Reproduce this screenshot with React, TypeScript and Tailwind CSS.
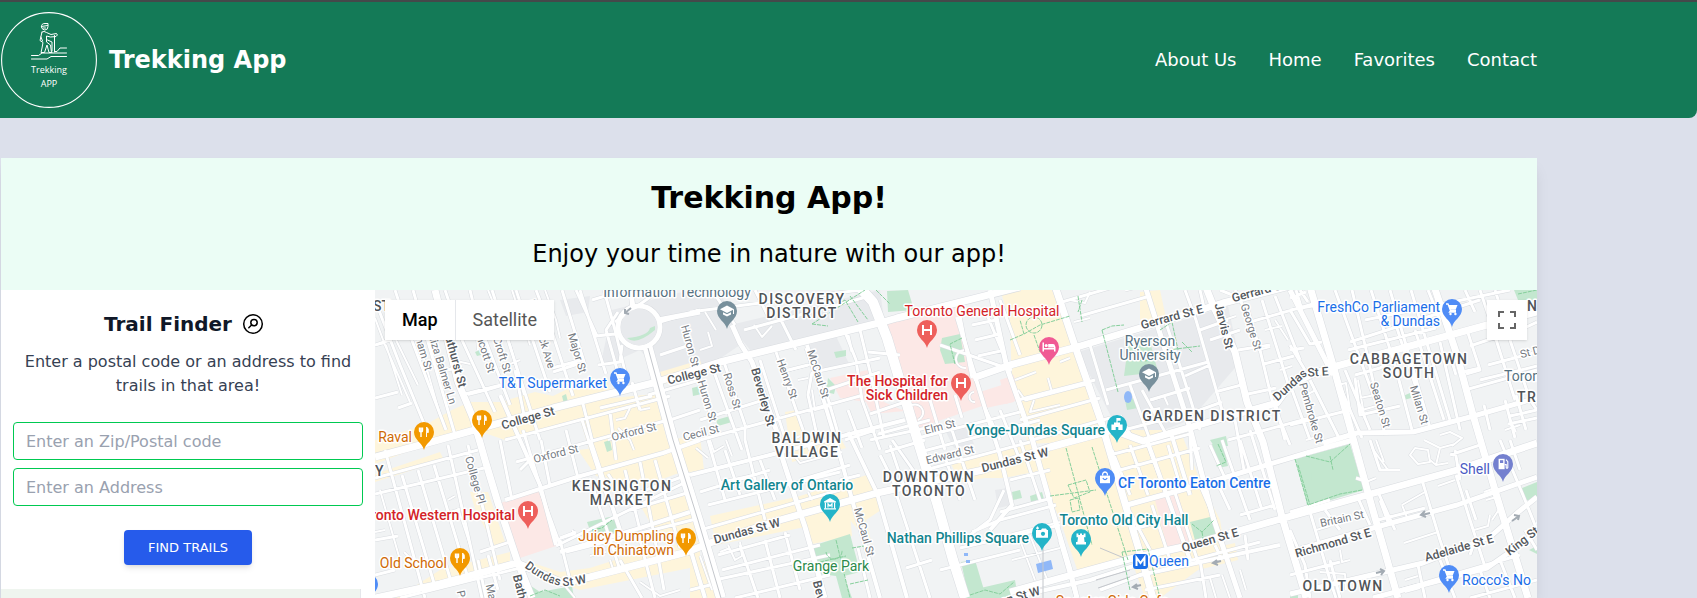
import React from "react";

const verdana = "font-[Verdana,'DejaVu_Sans',sans-serif]";

/* ---------- Map data ---------- */

const commercial = [
  "375,440 425,425 452,410 470,402 500,402 535,392 553,396 590,378 608,382 612,398 655,394 668,444 590,452 580,420 560,424 505,440 470,428 375,464",
  "660,372 700,360 704,372 664,384",
  "375,474 440,452 444,460 375,482",
  "578,450 700,436 704,470 676,474 660,480 620,492 600,492 608,478 596,476",
  "470,492 488,492 506,545 496,548 476,512",
  "380,596 412,588 440,570 510,552 510,572 450,586 400,598",
  "530,562 560,572 590,568 640,552 700,540 700,566 640,578 580,590 545,578",
  "640,505 690,492 700,530 660,540",
  "710,516 800,496 870,474 884,508 866,520 872,545 858,530 850,520 800,528 716,545",
  "805,525 850,514 852,536 812,544",
  "785,412 798,410 806,438 836,430 846,448 792,462",
  "950,462 1032,440 1044,470 1004,478 985,478 960,482",
  "690,566 708,560 716,598 690,598",
  "1000,290 1052,290 1074,350 1110,440 1028,444 1012,388 1010,320",
  "1140,292 1160,290 1166,318 1140,328",
  "1030,450 1100,430 1180,430 1200,480 1220,520 1225,550 1160,598 1145,598 1130,556 1078,572 1060,520",
  "1160,560 1235,543 1238,560 1190,572 1160,598",
];
const institutional = [
  "612,310 690,290 720,290 740,345 700,372 660,372 640,350 600,368",
  "730,325 880,290 884,320 755,356",
  "1078,352 1190,318 1228,306 1240,362 1190,420 1150,435 1118,430",
  "808,345 836,336 850,366 818,372",
  "944,428 966,424 974,444 954,448",
  "1041,452 1068,446 1076,474 1050,480",
  "995,490 1008,488 1012,505 998,508",
  "1030,352 1062,345 1068,365 1040,380 1030,372",
  "690,330 712,322 722,345 700,352",
  "560,300 590,296 588,312 566,316",
];
const hospitals = [
  "500,503 540,491 556,546 520,558",
  "885,322 955,302 985,405 918,428 908,405",
  "830,378 868,370 884,402 902,410 908,398 916,410 872,414 866,402 840,398",
  "980,392 1008,383 1014,402 986,408",
  "1155,500 1178,494 1192,546 1168,550",
  "1000,380 1014,375 1018,400 1006,404",
];
const parks = [
  "887,291 908,290 914,310 888,312",
  "942,338 960,334 965,362 945,364 940,350",
  "1128,346 1150,342 1158,372 1124,376",
  "587,522 614,516 618,532 592,536",
  "812,546 850,534 860,572 844,576 852,598 842,598 836,576 820,574",
  "961,562 975,560 984,590 968,594",
  "972,590 1015,580 1018,598 964,598",
  "1190,522 1214,516 1217,540 1196,544",
  "1295,459 1350,444 1364,490 1308,507",
  "1222,440 1228,466 1218,468 1212,444",
  "1300,462 1311,456 1312,508 1307,506",
  "1522,488 1537,482 1537,498 1524,501",
  "1514,290 1537,290 1537,300 1518,300",
  "1529,550 1537,546 1537,554",
  "716,420 730,416 732,422 718,426",
  "834,352 846,350 846,356 836,358",
  "692,388 700,386 702,394 693,396",
  "1403,396 1410,393 1411,398 1404,400",
  "475,352 480,350 481,355 477,356",
  "525,582 540,592 572,586 574,598 528,598",
  "1030,496 1042,492 1044,499 1031,502",
  "1012,492 1020,490 1022,498 1013,500",
  "604,442 610,440 612,450 607,452",
  "562,396 566,394 568,402 564,404",
  "1125,400 1134,398 1138,408 1127,410",
  "1210,440 1226,436 1228,446 1214,446",
  "828,378 836,386 834,394 826,392",
  "1290,592 1298,590 1298,598 1290,598",
];
const trails = [
  "M812 324L865 290M850 296L868 320M838 304L845 300L858 322M812 324L828 326",
  "M1010 340L1024 334L1020 320M1024 334L1040 325L1070 316M1026 325A8 8 0 1 1 1042 325A8 8 0 1 1 1026 325M1034 335L1040 352",
  "M1102 330L1118 392M1102 330L1112 326L1124 325M1130 350A14 12 0 0 0 1156 355M1160 330L1172 322L1178 350M1168 350L1200 346M1182 342L1192 352",
  "M1066 448L1092 545M1092 447L1128 560M1050 496L1096 490M1068 485L1086 480L1090 492L1074 498ZM1070 500L1078 498L1080 510L1072 512Z",
  "M1122 552L1148 549L1160 598M1122 552L1130 590",
  "M592 530L602 528L612 520M820 562L846 556M836 540L850 598M826 552A8 8 0 1 0 842 550M850 584L868 580M852 548L864 546",
  "M1295 459L1308 505L1340 494L1362 490M1306 456L1330 462L1350 444M1330 456L1333 470",
  "M1298 465L1310 505M970 595L985 590L1000 594L1014 582M1192 524L1202 532L1214 520M1202 532L1204 544",
  "M955 364L950 344L962 338M1078 296L1082 322M1218 444L1226 462L1216 466",
  "M1082 300L1078 312M876 290L890 304M1518 294L1537 290M530 596L545 590L560 596",
];

/* Streets grouped by painted width */
const streets: { w: number; d: string[] }[] = [
  {
    w: 2,
    d: [
      "M375 318L385 345L410 402M386 345L402 395M375 345L385 343M396 340L418 385M420 345L440 415M488 290L510 345L524 395M512 290L530 345M545 290L556 320L560 338",
      "M452 360L470 364M474 300L478 350M500 368L520 360M508 330L516 328M468 395L488 390L505 385",
      "M375 532L385 530M380 490L400 560M404 552L412 560M448 500L455 496M450 512L460 509M458 508L470 545",
      "M616 420L625 418L630 408M640 410L650 408M618 428L630 440L634 450M608 440L640 430",
      "M700 350L712 346L708 332M705 312L716 330M754 325L762 337L772 326M786 345L800 341",
      "M790 370L812 364L816 378M798 380L808 378M812 390L815 410L830 406",
      "M964 350A5 5 0 1 0 966 368M974 392A5 5 0 1 0 975 402M912 405A7 7 0 1 1 918 420",
      "M1015 380L1036 372M1018 390L1025 400L1050 392M1034 400L1030 412L1060 405M1048 378L1052 392M1060 362L1070 358M1074 322L1090 318",
      "M1070 300L1085 303L1090 292M1152 400L1164 396L1168 405M1150 410L1160 408M1224 320L1236 316",
      "M1265 330L1282 326M1258 350L1270 347M1275 320L1288 340M1280 370L1292 366",
      "M1338 385L1346 383L1350 410M1358 380L1365 420M1362 410L1380 405M1360 398L1375 395M1306 440L1320 436M1308 394L1316 390",
      "M1410 455L1415 448L1428 450L1430 462L1418 464ZM1424 440L1440 448L1455 444M1430 460L1436 465L1448 463M1440 448L1436 465M1440 435L1450 432L1462 438L1452 446",
      "M1372 448L1388 470L1400 470M1376 440L1384 462M1366 482L1376 478M1402 505L1425 492M1402 505L1408 520M1438 486L1455 480M1484 492L1495 488M1486 500L1500 496M1404 543L1438 532",
      "M1492 520L1500 508M1474 530L1488 526L1490 515M1505 430L1520 425M1510 420L1516 432",
      "M1316 530L1330 526M1340 550L1342 562L1350 560M1320 572L1345 574L1346 590M1405 580L1418 576M1405 592L1420 588",
      "M1210 578L1216 598M1222 575L1230 598M1240 570L1246 590M1012 534L1060 522M1012 560L1060 548M1020 540L1035 580M1030 535L1048 582",
      "M700 556L712 590M728 545L735 560L742 556L740 542M720 552L730 548M696 448L708 458M710 440L714 452L724 446M726 440L732 456",
      "M790 450L800 463L842 452M808 492L812 500M792 440L800 436M720 482L758 474",
      "M556 540L575 534L572 530M590 556L606 552M560 580L575 598M640 582L660 596L680 590M610 560L614 572",
    ],
  },
  {
    w: 3,
    d: [
      "M375 300L400 365L432 443M395 290L408 330L446 430M413 290L455 435M445 290L462 340L495 412M470 290L476 315L510 405M492 290L540 440M516 290L550 392M536 290L552 332L573 396M562 290L585 365M580 290L606 374M604 290L615 330L628 384",
      "M375 345L390 340M375 398L398 392M398 408L412 403M448 370L462 366M465 394L505 384M515 370L525 420M552 368L582 360M553 372L578 364M596 336L615 334M598 365L620 362L622 345",
      "M375 494L484 468M375 478L478 450M385 450L425 598M402 475L436 590M418 470L452 585M434 465L468 578M448 445L482 598M468 445L500 580M500 440L512 500M523 430L540 486M541 440L550 486",
      "M375 540L398 536M375 575L395 570M480 552L510 542M400 598L520 568M486 598L478 560M498 590L488 555",
      "M516 462L668 420M505 440L670 396M520 470L530 460M566 430L578 478M582 420L608 500M590 478L620 570M608 474L625 500M625 470L640 530M640 462L655 540M655 460L680 548M540 490L560 545M560 538L576 532",
      "M566 552L700 518M556 546L690 480M630 510L690 492M618 500L690 474M560 540L570 580M655 540L664 590M620 560L642 598M640 540L655 598",
      "M582 400L592 440M610 412L616 460M600 408L652 396M632 382L640 410",
      "M597 336L576 290M592 300L625 290M615 322L660 290M660 322L700 310M620 380L606 330L618 312M660 355L690 345M648 395L700 380",
      "M690 312L860 290M744 330L870 296M780 318L796 350M712 290L735 325M755 290L770 320",
      "M700 410L670 420M698 372L712 420M712 366L742 450M760 360L784 435M776 352L810 450M724 362L745 425M700 440L860 396M700 420L770 398M745 425L745 440",
      "M806 348L814 372L880 358M780 372L808 365M848 335L852 352M845 332L856 360L862 400L880 450M860 330L872 380L884 438M820 392L880 372M868 352L900 355M824 385L840 440M812 372L808 395L818 440",
      "M870 414L905 402M878 434L930 420M885 452L925 440M918 438L1020 412M920 452L1040 420M925 470L1030 442",
      "M948 418L975 500M1000 410L1020 460M985 408L1000 440M1020 440L1040 500M946 460L960 500M930 400L945 450M955 395L962 418",
      "M972 378L960 316M985 310L1010 370M975 340L1000 334M978 356L1005 350M972 325L996 320M1000 300L1020 355M940 345L1012 370",
      "M960 548L1060 525M940 570L1020 550M972 532L1000 520L1056 505M1000 512L1052 498M1010 480L1050 470M1004 490L990 520L970 535",
      "M1025 400L1090 383M1018 400L1095 380M1032 440L1110 418M1020 420L1100 398M1090 345L1108 405M1106 390L1208 362M1120 415L1132 438M1130 385L1150 440M1142 390L1165 432",
      "M1185 290L1196 320L1222 410M1165 320L1175 350L1200 430M1200 330L1228 320M1185 376L1210 365M1210 340L1240 330M1215 392L1245 384M1150 400L1190 388",
      "M1062 302L1110 288M1080 316L1150 296M1125 290L1145 285M1200 290L1205 312M1220 290L1240 298",
      "M1248 310L1260 350L1272 400L1290 445M1262 300L1290 390M1275 296L1300 360M1250 322L1320 302M1264 364L1294 356M1248 394L1276 388M1238 350L1270 345M1290 310L1318 305M1300 290L1308 302M1235 290L1250 320",
      "M1275 402L1285 440M1292 390L1310 440M1290 345L1305 370M1310 380L1340 440M1333 370L1362 438M1345 370L1370 430",
      "M1335 290L1375 400M1352 290L1365 345L1385 435M1371 290L1395 365L1412 430M1390 290L1425 410L1430 428M1411 290L1450 420M1428 290L1440 320M1290 298L1306 292M1290 350L1304 348M1290 310L1310 344L1322 342M1296 290L1302 310",
      "M1348 350L1436 328M1350 342L1480 300M1365 320L1510 290M1355 375L1380 368L1390 362M1355 378L1360 415L1400 406M1395 322L1420 400M1440 342L1460 430M1415 330L1444 420",
      "M1462 372L1480 368M1465 290L1475 312M1480 290L1490 320L1515 400M1495 290L1502 312M1470 346L1500 336M1488 365L1537 352M1500 310L1530 400L1537 410M1467 330L1480 370L1466 374M1480 380L1537 366M1520 330L1537 322",
      "M1456 375L1450 355M1484 405L1490 430M1505 400L1515 438M1510 416L1537 410M1508 424L1537 418M1516 395L1526 430M1465 390L1537 370",
      "M1110 455L1190 434M1112 450L1130 495M1130 445L1148 495M1146 440L1165 492M1168 445L1180 485M1190 435L1192 470M1120 470L1200 448M1124 430L1200 410L1222 402",
      "M1130 512L1150 550M1152 505L1170 560M1174 490L1198 562M1200 485L1215 520M1210 445L1225 478M1222 440L1250 520M1240 440L1262 510M1130 530L1160 522M1216 480L1230 510M1235 420L1244 470M1250 430L1275 510",
      "M1200 560L1206 598M1215 545L1222 560M1245 535L1248 560M1228 440L1310 418M1240 515L1275 505M1145 590L1220 575M1170 566L1260 542",
      "M1290 425L1350 410M1308 505L1330 580L1336 598M1358 498L1370 525M1378 492L1395 530M1290 530L1305 565L1310 598M1378 520L1425 508M1380 500L1388 522M1325 510L1340 530M1356 478L1362 480",
      "M1422 480L1440 540L1450 570M1456 475L1470 520L1486 570M1455 450L1460 480M1500 440L1525 500L1537 530M1450 455L1480 445M1470 555L1475 540M1290 512L1330 500M1290 575L1340 562",
      "M1370 440L1380 470L1400 470M1510 440L1520 470M1466 490L1476 520M1400 590L1520 555M1418 565L1425 598M1440 560L1455 598M1480 570L1490 598M1500 560L1515 598M1525 530L1537 550M1340 598L1330 560M1470 598L1537 580",
      "M700 492L770 470M710 470L790 450M708 440L725 500M725 450L740 495M745 440L765 520M760 460L775 500M708 505L840 472M700 530L840 490M718 555L790 535M722 570L820 545M715 580L830 555M740 545L758 598M765 540L780 598M785 532L800 590M735 598L830 575",
      "M840 480L860 475M845 440L875 430M848 410L862 448M890 445L905 490M895 490L930 598M858 548L870 598M906 568L932 560M892 440L920 480M870 440L940 425M800 480L850 465M690 590L710 585M880 455L895 485",
    ],
  },
  {
    w: 4,
    d: [
      "M505 500L577 477L663 453L700 440",
      "M560 552L640 528L690 512",
      "M690 475L770 455L850 434L905 420",
      "M807 345L835 438L853 503L880 598",
      "M848 432L877 493L907 598",
      "M957 317L987 415L1000 455L1012 505L990 530",
      "M500 395L540 485L556 545",
      "M590 440L620 530",
      "M1100 590L1140 575L1210 560L1280 545",
      "M1077 598L1060 540",
      "M690 548L705 598",
      "M1143 563L1090 580L1010 598",
      "M1147 440L1190 560M1170 430L1190 495",
    ],
  },
  {
    w: 5,
    d: [
      "M732 325L740 343L752 362L777 432L782 457L797 503L805 527L825 598",
      "M990 290L1007 368L1033 442L1053 513L1070 570L1077 598",
      "M1140 270L1147 292L1173 375L1190 428L1213 517L1240 598",
      "M1127 505L1210 482L1310 452L1353 440",
      "M1323 443L1357 433L1413 432L1470 417L1537 398",
      "M1297 550L1373 528L1457 505L1537 477",
      "M1290 594L1350 580L1423 563L1490 537L1517 513L1537 497",
      "M1373 598L1487 568L1537 533",
      "M630 285L633 308M700 312L658 320",
      "M1333 375L1290 290",
    ],
  },
  {
    w: 7,
    d: [
      "M435 290L458 382L473 418L485 460L498 503L517 560L532 598",
      "M375 457L435 441L553 408L657 382L720 362L883 322L897 318L1020 287",
      "M973 378L1010 365L1077 347L1140 328L1223 303L1290 286",
      "M375 598L440 584L517 563L563 583L590 577L687 552L710 543L780 520L877 493L983 470L1050 447L1113 430L1143 441L1223 418L1277 403L1290 385L1310 375L1333 367L1487 325L1537 312",
      "M1010 592L1137 557L1183 547L1277 520L1367 495L1457 470L1537 443",
      "M1053 280L1077 352L1100 418L1127 510L1143 563L1153 598",
      "M1205 285L1213 305L1235 352L1247 402L1263 442L1282 517L1303 587L1306 598",
      "M1308 280L1333 365L1353 438L1370 500L1398 598",
      "M1432 280L1457 355L1473 415L1497 497L1528 598",
    ],
  },
  {
    w: 10,
    d: [
      "M647 345L673 440L698 520L721 598",
      "M853 280L873 302L887 338L913 425L937 503L953 560L965 598",
    ],
  },
];

/* ---------- Map labels ---------- */

type Street = [string, number, number, number, boolean?];
const streetNames: Street[] = [
  ["College St", 528, 418, -16, true],
  ["College St", 694, 374, -14, true],
  ["Oxford St", 634, 432, -14],
  ["Oxford St", 556, 454, -14],
  ["Bathurst St", 455, 358, 75, true],
  ["Eliza Balmer Ln", 442, 368, 73],
  ["Markham St", 420, 342, 73],
  ["Lippincott St", 482, 343, 72],
  ["Croft St", 502, 355, 72],
  ["Brunswick Ave", 541, 334, 73],
  ["Major St", 577, 353, 73],
  ["Huron St", 690, 346, 75],
  ["Huron St", 707, 401, 73],
  ["Ross St", 732, 391, 73],
  ["Beverley St", 763, 397, 74, true],
  ["Henry St", 787, 379, 70],
  ["McCaul St", 818, 374, 72],
  ["McCaul St", 864, 532, 74],
  ["Cecil St", 701, 433, -14],
  ["College Pl", 475, 480, 74],
  ["Dundas St W", 747, 531, -15, true],
  ["Dundas St W", 1015, 460, -14, true],
  ["Elm St", 940, 427, -14],
  ["Edward St", 950, 455, -14],
  ["Gerrard St E", 1172, 317, -15, true],
  ["Gerrard St E", 1263, 290, -15, true],
  ["Jarvis St", 1224, 326, 76, true],
  ["George St", 1251, 327, 73],
  ["Dundas", 1290, 385, -42, true],
  ["St E", 1318, 372, -4, true],
  ["Pembroke St", 1311, 413, 74],
  ["Seaton St", 1380, 405, 73],
  ["Milan St", 1419, 405, 73],
  ["Queen St E", 1210, 540, -16, true],
  ["Richmond St E", 1333, 543, -16, true],
  ["Adelaide St E", 1459, 548, -16, true],
  ["King St E", 1526, 538, -38, true],
  ["Britain St", 1342, 519, -12],
  ["St David St", 1546, 348, -15],
  ["Bathurst St", 524, 604, 76, true],
  ["Markham", 494, 607, 78],
  ["Palmerston", 466, 618, 78],
  ["Beverley St", 824, 610, 76, true],
  ["Queen St W", 1010, 599, -16, true],
];

const districts: [string, number, number][] = [
  ["DISCOVERY", 802, 304],
  ["DISTRICT", 802, 318],
  ["BALDWIN", 807, 443],
  ["VILLAGE", 807, 457],
  ["KENSINGTON", 622, 491],
  ["MARKET", 622, 505],
  ["DOWNTOWN", 929, 482],
  ["TORONTO", 929, 496],
  ["GARDEN DISTRICT", 1212, 421],
  ["CABBAGETOWN", 1409, 364],
  ["SOUTH", 1409, 378],
  ["OLD TOWN", 1343, 591],
];

type Place = { t: string; x: number; y: number; a: "start" | "middle" | "end"; c: string };
const red = "fill-[#d32228]";
const teal = "fill-[#12858f]";
const blue = "fill-[#1a6ee8]";
const orange = "fill-[#cf6a05]";
const slate = "fill-[#56717f]";
const places: Place[] = [
  { t: "Information Technology", x: 677, y: 297, a: "middle", c: slate },
  { t: "T&T Supermarket", x: 607, y: 388, a: "end", c: blue },
  { t: "Raval", x: 412, y: 442, a: "end", c: orange },
  { t: "Toronto Western Hospital", x: 515, y: 520, a: "end", c: red },
  { t: "Old School", x: 447, y: 568, a: "end", c: orange },
  { t: "Juicy Dumpling", x: 674, y: 541, a: "end", c: orange },
  { t: "in Chinatown", x: 674, y: 555, a: "end", c: orange },
  { t: "Toronto General Hospital", x: 982, y: 316, a: "middle", c: red },
  { t: "The Hospital for", x: 948, y: 386, a: "end", c: red },
  { t: "Sick Children", x: 948, y: 400, a: "end", c: red },
  { t: "Yonge-Dundas Square", x: 1105, y: 435, a: "end", c: teal },
  { t: "Ryerson", x: 1150, y: 346, a: "middle", c: slate },
  { t: "University", x: 1150, y: 360, a: "middle", c: slate },
  { t: "CF Toronto Eaton Centre", x: 1118, y: 488, a: "start", c: blue },
  { t: "Art Gallery of Ontario", x: 787, y: 490, a: "middle", c: teal },
  { t: "Nathan Phillips Square", x: 1029, y: 543, a: "end", c: teal },
  { t: "Toronto Old City Hall", x: 1124, y: 525, a: "middle", c: teal },
  { t: "Grange Park", x: 831, y: 571, a: "middle", c: "fill-[#2b8a4a]" },
  { t: "Queen", x: 1149, y: 566, a: "start", c: blue },
  { t: "FreshCo Parliament", x: 1440, y: 312, a: "end", c: blue },
  { t: "& Dundas", x: 1440, y: 326, a: "end", c: blue },
  { t: "Shell", x: 1490, y: 474, a: "end", c: "fill-[#4a5bc4]" },
  { t: "Rocco's No", x: 1462, y: 585, a: "start", c: blue },
  { t: "Toronto", x: 1504, y: 381, a: "start", c: slate },
  { t: "Scooter Girls Cafe", x: 1112, y: 606, a: "middle", c: orange },
];

const emphasised = new Set([
  "Toronto Western Hospital",
  "The Hospital for",
  "Sick Children",
  "Yonge-Dundas Square",
  "CF Toronto Eaton Centre",
  "Art Gallery of Ontario",
  "Nathan Phillips Square",
  "Toronto Old City Hall",
]);

/* ---------- Pins ---------- */

const glyphs: Record<string, React.ReactNode> = {
  hospital: <path d="M-4 -5V5M4 -5V5M-4 0H4" strokeWidth="2" />,
  food: (
    <g>
      <path d="M-4.5 -4.5V-1.5Q-4.5 0 -3 0Q-1.5 0 -1.5 -1.5V-4.5M-3 -4.5V5" strokeWidth="1.4" />
      <path d="M2.5 5V-5Q5 -4 4.4 0.5H2.5Z" fill="white" strokeWidth="0.8" />
    </g>
  ),
  cart: (
    <g>
      <path d="M-6 -5H-4L-1.5 1.5H4M-1.5 1.5L-2.5 3H4" strokeWidth="1.3" />
      <path d="M-3.6 -4H5.5L3.6 0.8H-2Z" fill="white" stroke="none" />
      <circle cx="-1.5" cy="5" r="1.2" fill="white" stroke="none" />
      <circle cx="3.4" cy="5" r="1.2" fill="white" stroke="none" />
    </g>
  ),
  cap: (
    <g fill="white" stroke="none">
      <path d="M0 -5.5L7 -1.7L0 2L-7 -1.7Z" />
      <path d="M-4 1.2L0 3.3L4 1.2V3.5L0 5.6L-4 3.5Z" />
      <path d="M6 -1.7H7V3H6Z" />
    </g>
  ),
  bed: (
    <g fill="white" stroke="none">
      <path d="M-6.5 -4.5H-5V1H5V-0.5H6.5V4.5H5V2.6H-5V4.5H-6.5Z" />
      <circle cx="-2.8" cy="-1.6" r="1.5" />
      <path d="M-0.8 -3H4Q6 -3 6 -1V0.4H-0.8Z" />
    </g>
  ),
  museum: (
    <g>
      <path d="M0 -6L6 -2.6V-1.4H-6V-2.6ZM-6 4.2H6V5.6H-6Z" fill="white" stroke="none" />
      <path d="M-4.6 -1.5V4.5M4.6 -1.5V4.5M-2 3.4V-0.2L0 2L2 -0.2V3.4" strokeWidth="1.2" />
    </g>
  ),
  flag: (
    <g fill="white" stroke="none">
      <path d="M-0.6 -7H3.6V-4.2H0.6V-2.6H3V-0.4H5.6V5H1.3V2H-1.3V5H-5.6V-0.4H-3V-2.6H-0.6Z" />
    </g>
  ),
  camera: (
    <g>
      <path d="M-6 -3H-1L0 -4.5H4L5 -3H6V4.8H-6Z" fill="white" stroke="none" />
      <circle cx="1" cy="0.8" r="2.1" className="fill-[#24b4c8]" stroke="none" />
      <path d="M-4.5 -6.4V-3.4M-6 -4.9H-3" strokeWidth="1.1" />
    </g>
  ),
  tower: <path d="M-4.5 -5.5H-2.6V-4H-1V-5.5H1V-4H2.6V-5.5H4.5V-1.8H3L3.6 3H5V5.4H-5V3H-3.6L-3 -1.8H-4.5Z" fill="white" stroke="none" />,
  bag: (
    <g>
      <path d="M-5 -2.4H5V5.2H-5Z" fill="white" stroke="none" />
      <path d="M-2.4 -2.4V-3.6A2.4 2.4 0 0 1 2.4 -3.6V-2.4" strokeWidth="1.3" />
      <path d="M-2.2 0Q0 3.4 2.2 0" className="stroke-[#4f8cf6]" strokeWidth="1.2" />
    </g>
  ),
  fuel: (
    <g>
      <path d="M-4.4 -5.2H1.6V5.2H-4.4Z" fill="white" stroke="none" />
      <path d="M-3 -3.8H0.2V-1H-3Z" className="fill-[#7480cf]" stroke="none" />
      <path d="M1.6 0.6H3.2V3.6Q4 4.8 4.8 3.6V-2.4L3 -4.4" strokeWidth="1.1" />
    </g>
  ),
};

const pins: { k: string; x: number; y: number; c: string }[] = [
  { k: "food", x: 424, y: 432, c: "fill-[#f29900]" },
  { k: "food", x: 482, y: 420, c: "fill-[#f29900]" },
  { k: "food", x: 460, y: 558, c: "fill-[#f29900]" },
  { k: "food", x: 686, y: 538, c: "fill-[#f29900]" },
  { k: "cart", x: 620, y: 378, c: "fill-[#4f8cf6]" },
  { k: "cart", x: 1452, y: 309, c: "fill-[#4f8cf6]" },
  { k: "cart", x: 1449, y: 575, c: "fill-[#4f8cf6]" },
  { k: "cart", x: 368, y: 584, c: "fill-[#4f8cf6]" },
  { k: "hospital", x: 528, y: 511, c: "fill-[#ee5f5b]" },
  { k: "hospital", x: 927, y: 330, c: "fill-[#ee5f5b]" },
  { k: "hospital", x: 961, y: 383, c: "fill-[#ee5f5b]" },
  { k: "cap", x: 727, y: 311, c: "fill-[#78909c]" },
  { k: "cap", x: 1149, y: 374, c: "fill-[#78909c]" },
  { k: "bed", x: 1049, y: 347, c: "fill-[#f05a94]" },
  { k: "flag", x: 1117, y: 425, c: "fill-[#24b4c8]" },
  { k: "museum", x: 830, y: 504, c: "fill-[#24b4c8]" },
  { k: "camera", x: 1042, y: 533, c: "fill-[#24b4c8]" },
  { k: "tower", x: 1081, y: 539, c: "fill-[#24b4c8]" },
  { k: "bag", x: 1105, y: 478, c: "fill-[#4f8cf6]" },
  { k: "fuel", x: 1503, y: 464, c: "fill-[#7480cf]" },
];

function CityMap() {
  return (
    <svg
      viewBox="375 290 1162 308"
      preserveAspectRatio="xMinYMin slice"
      className="block h-full w-full bg-[#f1f3f4] font-[Roboto,sans-serif]"
      role="img"
      aria-label="Map of downtown Toronto"
    >
      {institutional.map((p) => (
        <polygon key={p} points={p} className="fill-[#e8eaed]" />
      ))}
      {commercial.map((p) => (
        <polygon key={p} points={p} className="fill-[#fef5db]" />
      ))}
      {hospitals.map((p) => (
        <polygon key={p} points={p} className="fill-[#fce8e6]" />
      ))}
      {parks.map((p) => (
        <polygon key={p} points={p} className="fill-[#c3e7cf]" />
      ))}

      <g fill="none" strokeLinejoin="round">
        {streets.map((s) => (
          <path key={s.w} d={s.d.join("")} strokeWidth={s.w + 1} className="stroke-[#d9dce0]" />
        ))}
        <circle cx="639" cy="327" r="21" strokeWidth="6" className="stroke-[#d9dce0]" />
        {streets.map((s) => (
          <path key={s.w} d={s.d.join("")} strokeWidth={s.w} stroke="white" />
        ))}
        <circle cx="639" cy="327" r="21" strokeWidth="5" stroke="white" />
      </g>
      <circle cx="639" cy="327" r="18" className="fill-[#e8eaed]" />
      <path d="M627 338Q636 346 655 330V326L650 328Q648 336 627 338Z" className="fill-[#c3e7cf]" />
      <ellipse cx="1128" cy="397" rx="4" ry="6" className="fill-[#90b8f8]" />
      <path d="M1036 564L1051 560L1053 569L1038 573ZM964 553h4v3h-4ZM966 560h4v3h-4Z" className="fill-[#90b8f8]" />
      <path
        d="M648 348L673 440L698 520L721 598M1100 548L1124 558M1096 580L1130 570M1098 588L1130 577M1043 545V598"
        fill="none"
        strokeWidth="1"
        className="stroke-[#c4c7cc]"
      />
      <path d={trails.join("")} fill="none" strokeWidth="1" strokeDasharray="4 1" className="stroke-[#86cf9c]" />
      <g fill="none" strokeWidth="2" className="stroke-[#a3abb3]">
        <path d="M1422 515L1430 513M1425 511L1421 515L1426 517" />
        <path d="M1512 521L1519 516M1514 515L1519 516L1518 520" />
        <path d="M1376 573L1384 571M1380 569L1384 571L1381 575" />
        <path d="M1213 563L1221 561M1217 560L1213 563L1218 565" />
        <path d="M1133 587L1141 585M1137 584L1133 587L1138 589" />
        <path d="M625 313L631 308M625 309V313L629 314" />
      </g>

      <g className="stroke-white [paint-order:stroke]" strokeWidth="3" strokeLinejoin="round">
        {streetNames.map(([t, x, y, r, major]) => (
          <text
            key={t + x}
            transform={`translate(${x} ${y}) rotate(${r})`}
            textAnchor="middle"
            dominantBaseline="central"
            className={major ? "fill-[#53575c] text-[12px] font-medium" : "fill-[#74797f] text-[11px]"}
          >
            {t}
          </text>
        ))}
        <path id="dundas-bend" d="M524 567Q548 586 565 586Q578 586 594 580" fill="none" stroke="none" />
        <text className="fill-[#53575c] text-[12px] font-medium">
          <textPath href="#dundas-bend">Dundas St W</textPath>
        </text>
        {districts.map(([t, x, y]) => (
          <text key={t} x={x} y={y} textAnchor="middle" className="fill-[#505458] text-[14px] font-medium tracking-widest">
            {t}
          </text>
        ))}
        <text x="375" y="476" className="fill-[#505458] text-[14px] font-medium">Y</text>
        <text x="373" y="311" className="fill-[#505458] text-[14px] font-medium">ST</text>
        <text x="1527" y="311" className="fill-[#505458] text-[14px] font-medium">N</text>
        <text x="1517" y="402" className="fill-[#505458] text-[14px] font-medium tracking-widest">TR</text>
        {places.map((p) => (
          <text
            key={p.t}
            x={p.x}
            y={p.y}
            textAnchor={p.a}
            className={`${p.c} ${emphasised.has(p.t) ? "font-medium" : "font-normal"} text-[14px]`}
          >
            {p.t}
          </text>
        ))}
      </g>

      {pins.map((p) => (
        <g key={`${p.x}-${p.y}`} transform={`translate(${p.x} ${p.y})`}>
          <path d="M0 18C-1.5 11 -10 8 -10 0A10 10 0 1 1 10 0C10 8 1.5 11 0 18Z" className={p.c} />
          <g fill="none" stroke="white">
            {glyphs[p.k]}
          </g>
        </g>
      ))}
      <rect x="1133" y="554" width="15" height="15" rx="3" className="fill-[#1a6ee8]" />
      <path d="M1136.5 566V557.5L1140.5 563L1144.5 557.5V566" fill="none" stroke="white" strokeWidth="2" />
    </svg>
  );
}

function Logo() {
  return (
    <svg viewBox="0 0 96 96" className="size-24" fill="none" stroke="white" aria-hidden="true">
      <circle cx="48" cy="48" r="47.4" strokeWidth="1.1" />
      <g strokeWidth="1" strokeLinecap="round" strokeLinejoin="round">
        <path d="M40.5 15Q40 11.5 44 11.5H47V14.5Q47 18 43.8 18Q41 18 40.5 15ZM40.5 14.5L46.5 13.5M42.5 16H44.5" />
        <path d="M41 20Q43 18.500 45.500 20.500L50 22.500L55.500 21.500Q57.500 23 55 24.500L49.500 25L45.500 24V30L49.500 33L50.500 40.500M41 20L39 28.500L42 30.500L41 36L40 40.500H43.500L46 33L48 40.500H51M40 25L41.500 29" />
        <path d="M53.500 23.500V40M46.500 28L51 30V39" />
        <path d="M30.500 43.500H37.500L41 41H65.500M30.500 47H46L50 44.500H65.500M53.500 39.500H56L59 36H65.500" />
      </g>
      <g fill="white" stroke="none" className="font-['Open_Sans',sans-serif]" textAnchor="middle">
        <text x="48" y="61" className="text-[9px]">Trekking</text>
        <text x="48" y="75" className="text-[9px] font-medium">APP</text>
      </g>
    </svg>
  );
}

export default function App() {
  return (
    <div className={`flex min-h-screen flex-col overflow-x-hidden bg-[#dce0eb] text-black ${verdana}`}>
      <header className="rounded-br-lg border-t-2 border-[#45484a] bg-[#147a57] text-white">
        <div className="ml-px flex max-w-screen-2xl items-center justify-between py-2.5">
          <a href="#" className="flex items-center gap-3">
            <Logo />
            <span className="text-2xl font-bold">Trekking App</span>
          </a>
          <nav>
            <ul className="flex gap-8 text-lg">
              <li><a href="#about">About Us</a></li>
              <li><a href="#home">Home</a></li>
              <li><a href="#favorites">Favorites</a></li>
              <li><a href="#contact">Contact</a></li>
            </ul>
          </nav>
        </div>
      </header>

      <main className="mt-10 ml-px flex w-full max-w-screen-2xl flex-1 flex-col shadow-lg">
        <section className="bg-[#ebfdf5] pt-[22px] pb-5 text-center">
          <h1 className="text-3xl leading-9 font-bold">Trekking App!</h1>
          <p className="mt-[22px] text-2xl leading-8">Enjoy your time in nature with our app!</p>
        </section>

        <div className="flex flex-1">
          <aside className="flex w-[374px] shrink-0 flex-col bg-white">
            <div className="px-3 pt-5 pb-6 text-center">
              <div className="flex items-center justify-center gap-2.5 pr-2">
                <h2 className="text-xl font-bold text-gray-900">Trail Finder</h2>
                <svg viewBox="0 0 22 22" className="size-[22px]" fill="none" stroke="black" strokeWidth="1.5" strokeLinecap="round" aria-hidden="true">
                  <circle cx="11" cy="11" r="9.3" />
                  <circle cx="12" cy="9.600" r="3.2" />
                  <path d="M9.600 12L6.800 14.800" />
                </svg>
              </div>
              <p className="mt-3 text-base text-gray-700">
                Enter a postal code or an address to find trails in that area!
              </p>
              <form className="mt-6 flex flex-col items-center gap-2" onSubmit={(e) => e.preventDefault()}>
                <input
                  aria-label="Zip or postal code"
                  placeholder="Enter an Zip/Postal code"
                  className="h-[38px] w-full rounded border border-green-500 px-3 text-base placeholder:text-gray-400"
                />
                <input
                  aria-label="Address"
                  placeholder="Enter an Address"
                  className="h-[38px] w-full rounded border border-green-500 px-3 text-base placeholder:text-gray-400"
                />
                <button
                  type="submit"
                  className="mt-4 rounded bg-[#265beb] px-6 py-2.5 text-[13px] leading-[15px] font-medium text-white uppercase shadow-md"
                >
                  Find Trails
                </button>
              </form>
            </div>
            <div className="mr-3.5 flex-1 border-r border-gray-200 bg-[#eff5ef]" />
          </aside>

          <section className="relative min-w-0 flex-1 overflow-hidden">
            <div className="absolute inset-0">
              <CityMap />
            </div>
            <div className="absolute top-2.5 left-2.5 flex h-10 bg-white font-[Roboto,sans-serif] text-lg shadow">
              <button type="button" className="border-r border-gray-200 px-[17px] font-medium text-black">Map</button>
              <button type="button" className="px-[17px] text-[#565656]">Satellite</button>
            </div>
            <button
              type="button"
              aria-label="Toggle fullscreen view"
              className="absolute top-2.5 right-2.5 flex size-10 items-center justify-center bg-white shadow"
            >
              <svg viewBox="0 0 18 18" className="size-[18px]" fill="none" stroke="#666" strokeWidth="2" aria-hidden="true">
                <path d="M1 6V1H6M12 1H17V6M17 12V17H12M6 17H1V12" />
              </svg>
            </button>
          </section>
        </div>
      </main>
    </div>
  );
}
